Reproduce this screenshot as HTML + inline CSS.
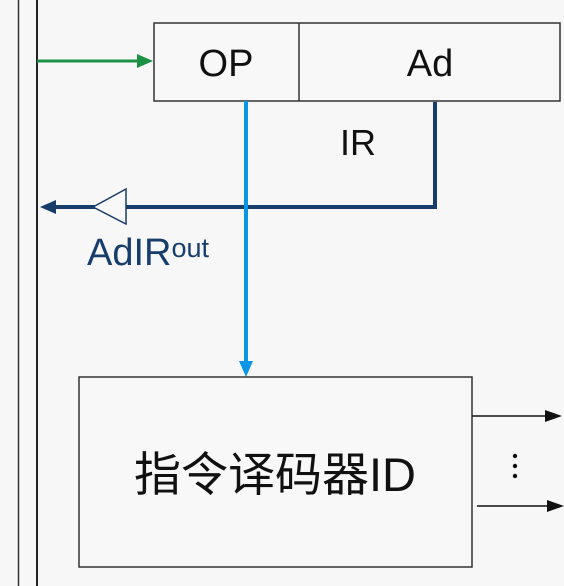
<!DOCTYPE html>
<html><head><meta charset="utf-8"><style>
html,body{margin:0;padding:0;background:#f7f7f7;}
svg{display:block}
</style></head><body>
<svg width="564" height="586" viewBox="0 0 564 586" xmlns="http://www.w3.org/2000/svg">
<rect width="564" height="586" fill="#f7f7f7"/>
<line x1="18.5" y1="0" x2="18.5" y2="586" stroke="#333" stroke-width="1.5"/>
<line x1="37" y1="0" x2="37" y2="586" stroke="#222" stroke-width="2"/>
<line x1="37" y1="61" x2="140" y2="61" stroke="#1a9145" stroke-width="3"/>
<polygon points="153,61 137,54 137,68" fill="#1a9145"/>
<rect x="154" y="23" width="406" height="78" fill="#f8f8f8" stroke="#333" stroke-width="1.5"/>
<line x1="299" y1="23" x2="299" y2="101" stroke="#333" stroke-width="1.5"/>
<text x="226" y="76" font-family="Liberation Sans, sans-serif" font-size="38" text-anchor="middle" fill="#111">OP</text>
<text x="430" y="76" font-family="Liberation Sans, sans-serif" font-size="38" text-anchor="middle" fill="#111">Ad</text>
<text x="358" y="155" font-family="Liberation Sans, sans-serif" font-size="36" text-anchor="middle" fill="#111">IR</text>
<polyline points="435,102 435,207 52,207" fill="none" stroke="#173d6b" stroke-width="4"/>
<polygon points="40,207 56,200 56,214" fill="#173d6b"/>
<polygon points="93,207 126,189 126,224" fill="#f8f8f8" stroke="#173d6b" stroke-width="1.5"/>
<text x="87" y="265" font-family="Liberation Sans, sans-serif" font-size="38" fill="#173d6b">AdIR<tspan font-size="27" dy="-8">out</tspan></text>
<line x1="246" y1="101" x2="246" y2="362" stroke="#0a96e6" stroke-width="4"/>
<polygon points="246,377 239,361 253,361" fill="#0a96e6"/>
<rect x="79" y="377" width="393" height="190" fill="#f8f8f8" stroke="#333" stroke-width="1.5"/>
<text x="275" y="491" font-family="Liberation Sans, 'Noto Sans CJK SC', sans-serif" font-size="47" text-anchor="middle" fill="#111">指令译码器ID</text>
<line x1="472" y1="416" x2="548" y2="416" stroke="#111" stroke-width="1.5"/>
<polygon points="562,416 545,410 545,422" fill="#111"/>
<line x1="477" y1="506" x2="550" y2="506" stroke="#111" stroke-width="1.5"/>
<polygon points="564,506 547,500 547,512" fill="#111"/>
<circle cx="515" cy="456" r="2.2" fill="#111"/>
<circle cx="515" cy="466" r="2.2" fill="#111"/>
<circle cx="515" cy="476" r="2.2" fill="#111"/>
</svg>
</body></html>
